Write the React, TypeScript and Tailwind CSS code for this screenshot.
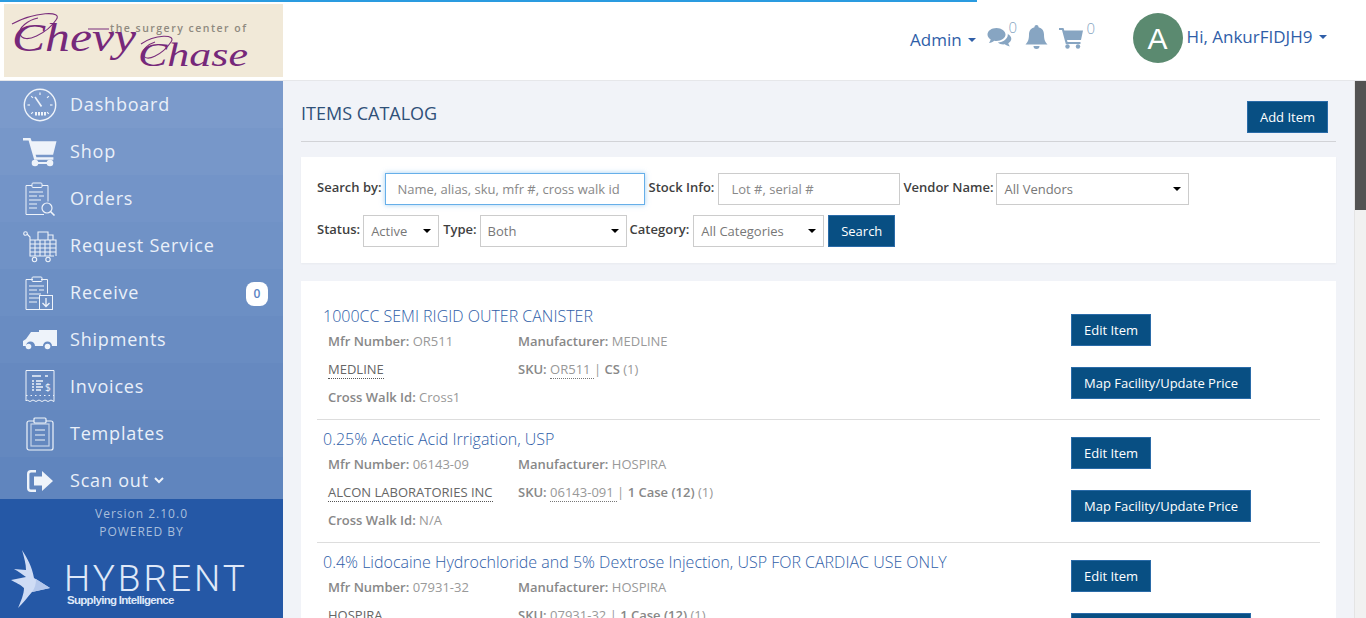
import React from "react";

const W = "#eef3fa";

function Gauge() {
  const ticks = [0, 45, 90, 135, 225, 270, 315];
  return (
    <svg width="34" height="34" viewBox="0 0 34 34" fill="none" stroke={W}>
      <circle cx="17" cy="17" r="15.7" strokeWidth="1.4" />
      {ticks.map((a) => (
        <line key={a} x1="17" y1="4.5" x2="17" y2="7" strokeWidth="1.2" transform={`rotate(${a} 17 17)`} />
      ))}
      <line x1="12" y1="9" x2="18.5" y2="18.5" strokeWidth="1.6" />
      <rect x="12" y="24" width="2" height="3.5" fill={W} stroke="none" />
      <rect x="15" y="24" width="2" height="3.5" fill={W} stroke="none" />
      <rect x="18" y="24" width="2" height="3.5" fill={W} stroke="none" />
      <rect x="21" y="24" width="2" height="3.5" fill={W} stroke="none" />
    </svg>
  );
}
function Cart() {
  return (
    <svg width="34" height="30" viewBox="0 0 34 30" fill={W}>
      <path d="M0 1h7.500l1.200 3.200H33.500l-3.400 13.600H12.600l.8 2.400h17v2.600H11.200L5.600 3.600H0z" />
      <circle cx="12" cy="26" r="3.300" />
      <circle cx="27" cy="26" r="3.300" />
      <rect x="12" y="25" width="15" height="2" />
    </svg>
  );
}
function ClipSearch() {
  return (
    <svg width="34" height="34" viewBox="0 0 34 34" fill="none" stroke={W} strokeWidth="1">
      <path d="M9 3.500H3v29h18" />
      <path d="M19 3.500h6v16" />
      <rect x="9" y="1" width="10" height="4.500" rx="1" />
      <path d="M6 10h14M6 14h8M16 14h5M6 18h12M6 22h8M6 26h8" strokeWidth="1.200" />
      <circle cx="24" cy="26" r="5" strokeWidth="1.200" />
      <path d="M27.500 29.500l4 4" strokeWidth="1.600" />
    </svg>
  );
}
function ServiceCart() {
  return (
    <svg width="34" height="34" viewBox="0 0 34 34" fill="none" stroke={W} strokeWidth="1.100">
      <circle cx="2.500" cy="4.500" r="1.800" />
      <path d="M4 5l3 3v19h24" />
      <path d="M7 11h26v16M7 15h26M7 19h26M7 23h26M12 11v16M17 11v16M22 11v16M27 11v16" />
      <path d="M15 11V3h10v8M25 6h5v5" />
      <circle cx="11.500" cy="30.500" r="2.200" />
      <circle cx="25" cy="30.500" r="2.200" />
    </svg>
  );
}
function ClipDown() {
  return (
    <svg width="34" height="34" viewBox="0 0 34 34" fill="none" stroke={W} strokeWidth="1">
      <path d="M10 3.500H3v30h18" />
      <path d="M18 3.500h6.500v14" />
      <rect x="9" y="1" width="10" height="4.500" rx="1" />
      <path d="M6 10h15M6 14h8M16 14h5M6 18h12M6 22h10M6 26h8" strokeWidth="1.200" />
      <rect x="16.500" y="19.500" width="13" height="14" />
      <path d="M23 22v8M19.500 27l3.500 3.500 3.500-3.500" strokeWidth="1.300" />
    </svg>
  );
}
function Truck() {
  return (
    <svg width="34" height="20" viewBox="0 0 34 20" fill={W}>
      <path d="M16 0h18v16h-5a4.500 4.500 0 0 0-9 0h-8a4.500 4.500 0 0 0-9 0H0v-5l3-2 5-7h8z" />
      <circle cx="5.500" cy="16.500" r="2.800" />
      <circle cx="24.500" cy="16.500" r="2.800" />
    </svg>
  );
}
function Receipt() {
  return (
    <svg width="30" height="34" viewBox="0 0 30 34" fill="none" stroke={W} strokeWidth="1">
      <path d="M1 .5h28v31l-3-1.500-3 1.500-3-1.500-3 1.500-3-1.500-3 1.500-3-1.500-3 1.500-3-1.500-1 1z" />
      <path d="M7 6h9M20 6h3M7 11h2M11 11h7M7 14h2M11 14h5M7 17h2M11 17h7M7 20h2M11 20h5" strokeWidth="1.300" />
      <path d="M1 25.500h28" strokeDasharray="1.500 3" />
      <text x="20" y="21" fill={W} stroke="none" fontSize="10" fontFamily="Open Sans, sans-serif">$</text>
    </svg>
  );
}
function Template() {
  return (
    <svg width="28" height="34" viewBox="0 0 28 34" fill="none" stroke={W} strokeWidth="1.200">
      <rect x="1" y="4" width="26" height="29" rx="2" />
      <rect x="5" y="7" width="18" height="22" opacity=".7" />
      <rect x="8" y="1" width="12" height="5" rx="1" fill="#6d90c4" />
      <path d="M9 13h10M9 18h10M9 23h10" />
    </svg>
  );
}
function ScanOut() {
  return (
    <svg width="28" height="24" viewBox="0 0 28 24" fill={W}>
      <path d="M10 1H5a4 4 0 0 0-4 4v14a4 4 0 0 0 4 4h5v-2.400H5A1.600 1.600 0 0 1 3.400 19V5A1.600 1.600 0 0 1 5 3.400h5z" />
      <path d="M8 7.500h8V2l11 10-11 10v-5.500H8z" />
    </svg>
  );
}

const menu: { label: React.ReactNode; icon: React.ReactNode; bg: string; badge?: boolean }[] = [
  { label: "Dashboard", icon: <Gauge />, bg: "bg-[#7b9acb]" },
  { label: "Shop", icon: <Cart />, bg: "bg-[#7797c9]" },
  { label: "Orders", icon: <ClipSearch />, bg: "bg-[#7394c8]" },
  { label: "Request Service", icon: <ServiceCart />, bg: "bg-[#7092c6]" },
  { label: "Receive", icon: <ClipDown />, bg: "bg-[#6c8fc4]", badge: true },
  { label: "Shipments", icon: <Truck />, bg: "bg-[#698cc2]" },
  { label: "Invoices", icon: <Receipt />, bg: "bg-[#6689c0]" },
  { label: "Templates", icon: <Template />, bg: "bg-[#6488bf]" },
  {
    label: (
      <span className="flex items-center gap-[5px]">
        Scan out
        <svg width="10" height="7" viewBox="0 0 10 7" fill="none" stroke={W} strokeWidth="2"><path d="M1 1l4 4 4-4" /></svg>
      </span>
    ),
    icon: <ScanOut />,
    bg: "bg-[#6085be]",
  },
];

function Caret() {
  return <span className="inline-block w-0 h-0 border-x-[4px] border-x-transparent border-t-[4px] border-t-[#2f5ea8]" />;
}

function Btn({ children, className = "" }: { children: React.ReactNode; className?: string }) {
  return (
    <button className={`h-8 pt-[1px] bg-[#084f83] border border-[#2a6ba8] text-white text-[13px] font-normal flex items-center justify-center ${className}`}>
      {children}
    </button>
  );
}

function Label({ children }: { children: React.ReactNode }) {
  return <span className="text-[13px] font-semibold text-[#3f3f3f] leading-[28px] self-start whitespace-nowrap">{children}</span>;
}

function Sel({ children, className = "" }: { children: string; className?: string }) {
  return (
    <span className={`relative block h-8 ${className}`}>
      <select className="block w-full h-8 appearance-none rounded-none bg-white border border-[#cccccc] text-[13px] text-[#777] pl-[7px] pt-[2px]">
        <option>{children}</option>
      </select>
      <span className="absolute right-[8px] top-[14px] w-0 h-0 border-x-[4px] border-x-transparent border-t-[4px] border-t-black" />
    </span>
  );
}

const items = [
  { t: "1000CC SEMI RIGID OUTER CANISTER", m: "OR511", f: "MEDLINE", v: "MEDLINE", s: "OR511", p: "CS", c: "Cross1" },
  { t: "0.25% Acetic Acid Irrigation, USP", m: "06143-09", f: "HOSPIRA", v: "ALCON LABORATORIES INC", s: "06143-091", p: "1 Case (12)", c: "N/A" },
  { t: "0.4% Lidocaine Hydrochloride and 5% Dextrose Injection, USP FOR CARDIAC USE ONLY", m: "07931-32", f: "HOSPIRA", v: "HOSPIRA", s: "07931-32", p: "1 Case (12)", c: "N/A" },
];

function Logo() {
  return (
    <svg width="279" height="73" viewBox="0 0 279 73" className="block">
      <rect width="279" height="73" fill="#f1e9d8" />
      <path d="M8 20C30 8 60 6 52 16 44 28 20 42 16 30 14 24 24 16 34 14M84 25h21" fill="none" stroke="#7a2e7c" strokeWidth="1.100" />
      <path d="M137 40c14-10 36-10 30-2-8 12-26 22-28 12-1-5 6-10 12-12" fill="none" stroke="#7a2e7c" strokeWidth="1.100" />
      <text x="8" y="47" fontFamily="Liberation Serif, serif" fontStyle="italic" fontSize="40" fill="#76287a" textLength="124" lengthAdjust="spacingAndGlyphs">Chevy</text>
      <text x="134" y="62" fontFamily="Liberation Serif, serif" fontStyle="italic" fontSize="34" fill="#76287a" textLength="110" lengthAdjust="spacingAndGlyphs">Chase</text>
      <text x="106" y="28" fontFamily="Open Sans, sans-serif" fontWeight="600" fontSize="10.500" fill="#8f8a80" textLength="136">the surgery center of</text>
    </svg>
  );
}

function Wing() {
  return (
    <svg width="40" height="58" viewBox="0 0 40 58" className="shrink-0">
      <path d="M11 0c5 8 10 16 12 28l16 10-18 4c-5 6-9 11-14 16 3-7 6-14 6-20C9 34 5 33 0 30l15-3C11 24 8 22 3 19l12 1C15 14 13 7 11 0z" fill="#cfdcf5" />
      <path d="M21 42l18-4-14-9c0 5-1 9-4 13z" fill="#b5c8ec" />
    </svg>
  );
}

export default function App() {
  return (
    <div className="relative h-[618px] w-[1366px] overflow-hidden flex flex-col bg-[#f1f3f8] font-['Open_Sans',sans-serif]">
      <div className="absolute left-0 top-0 h-[2px] w-[977px] bg-[#2a9be0]" />
      <header className="h-[81px] shrink-0 bg-white border-b border-[#e6e7ea] flex">
        <div className="pl-[4px] pt-[4px] w-[283px] shrink-0"><Logo /></div>
        <div className="flex-1 flex items-start pl-[627px] text-[#2f5ea8] text-[17px]">
          <span className="mt-[29px] leading-[22px] flex items-center gap-[6px]">Admin <Caret /></span>
          <span className="ml-[11px] mt-[27px] flex">
            <svg width="25" height="21" viewBox="0 0 25 21" fill="#87a5c2">
              <path d="M9.500 1C4.500 1 .5 3.900.5 7.500c0 2 1.300 3.800 3.200 5C3.400 13.700 2.700 15 2 16c2-.3 4-1.200 5.300-2.300.7.100 1.400.2 2.200.2 5 0 9-2.900 9-6.400S14.500 1 9.500 1z" />
              <path d="M20.500 6.500c.2.400.3.800.3 1.200 0 4-4.300 7.400-10 7.800 1.400 1.200 3.300 1.900 5.500 1.900.5 0 1 0 1.500-.1 1.300 1 3 1.800 5 2.200-.7-1-1.300-2.200-1.500-3.200 1.800-1.100 3-2.700 3-4.500 0-2-1.500-3.700-3.800-4.700z" />
            </svg>
          </span>
          <span className="mt-[18px] -ml-[3px] text-[15px] font-light leading-[18px] text-[#87a5c2] w-[16px]">0</span>
          <span className="mt-[25px]">
            <svg width="23" height="25" viewBox="0 0 23 25" fill="#87a5c2">
              <path d="M11.500 0a2 2 0 0 1 2 2.200c3.600.8 5.500 3.600 5.500 7.300 0 5 1 7.500 3.500 10H.5C3 17 4 14.500 4 9.500c0-3.700 1.900-6.500 5.500-7.300A2 2 0 0 1 11.500 0z" />
              <path d="M8.500 21h6a3 3 0 0 1-6 0z" />
            </svg>
          </span>
          <span className="ml-[11px] mt-[27px]">
            <svg width="24" height="22" viewBox="0 0 24 22" fill="#87a5c2">
              <path d="M0 1h4.500l.8 2.500H24l-2 9.500H8l.5 2h13v2H6.800L3 3H0z" />
              <circle cx="8.500" cy="19.500" r="2.200" />
              <circle cx="19" cy="19.500" r="2.200" />
            </svg>
          </span>
          <span className="mt-[19px] ml-[4px] text-[15px] font-light leading-[18px] text-[#87a5c2] w-[10px]">0</span>
          <span className="ml-[36px] mt-[13px] w-[50px] h-[50px] rounded-full bg-[#5b8a70] text-white text-[30px] font-['Liberation_Sans',sans-serif] flex items-center justify-center">A</span>
          <span className="ml-[4px] mt-[25px] leading-[24px] flex items-center gap-[7px] whitespace-nowrap">Hi, AnkurFIDJH9 <Caret /></span>
        </div>
      </header>

      <div className="flex-1 flex min-h-0">
        <aside className="w-[283px] shrink-0 flex flex-col">
          <nav className="h-[418px] shrink-0 overflow-hidden">
            {menu.map((m, i) => (
              <div key={i} className={`h-[47px] flex items-center pr-[15px] ${m.bg}`}>
                <span className="w-[34px] ml-[23px] mr-[13px] flex justify-center">{m.icon}</span>
                <span className="flex-1 text-[18px] tracking-[0.8px] text-[#eaf0f9]">{m.label}</span>
                {m.badge && (
                  <span className="w-[22px] h-[24px] rounded-[8px] bg-white text-[#5b84c4] text-[12px] font-semibold flex items-center justify-center mt-[2px]">0</span>
                )}
              </div>
            ))}
          </nav>
          <div className="flex-1 bg-[#2558a6] flex flex-col items-center">
            <div className="mt-[6px] text-[12px] leading-[18px] tracking-[1px] text-[#a9bfdc]">Version 2.10.0</div>
            <div className="text-[12px] leading-[18px] tracking-[1px] text-[#a9bfdc]">POWERED BY</div>
            <div className="self-start flex pl-[11px] mt-[9px]">
              <Wing />
              <div className="ml-[13px] mt-[14px]">
                <div className="font-['Roboto',sans-serif] font-light text-[37px] leading-[30px] tracking-[3px] text-[#dfe8f8]">HYBRENT</div>
                <div className="font-['Liberation_Sans',sans-serif] font-bold text-[11.5px] leading-[12px] -tracking-[0.7px] text-[#dfe8f8] ml-[3px]">Supplying Intelligence</div>
              </div>
            </div>
          </div>
        </aside>

        <main className="flex-1 min-w-0 overflow-hidden px-[18px]">
          <div className="h-[61px] border-b border-[#d2d3d7] flex justify-between items-start">
            <h1 className="mt-[20px] text-[18px] leading-[24px] text-[#2f5078]">ITEMS CATALOG</h1>
            <Btn className="mt-[20px] mr-[8px] w-[81px]">Add Item</Btn>
          </div>

          <section className="mt-[15px] h-[106px] bg-white px-[16px] pt-[16px] shadow-[0_1px_2px_rgba(0,0,0,0.04)]">
            <div className="flex items-start">
              <Label>Search by:</Label>
              <input
                placeholder="Name, alias, sku, mfr #, cross walk id"
                className="ml-[3px] w-[260px] h-8 border border-[#66afe9] shadow-[0_0_5px_rgba(102,175,233,0.6)] px-3 text-[13px] outline-none placeholder:text-[#888]"
              />
              <span className="w-[4px]" />
              <Label>Stock Info:</Label>
              <input
                placeholder="Lot #, serial #"
                className="ml-[4px] w-[182px] h-8 border border-[#cccccc] px-3 text-[13px] outline-none placeholder:text-[#888]"
              />
              <span className="w-[3px]" />
              <Label>Vendor Name:</Label>
              <Sel className="ml-[3px] w-[193px]">All Vendors</Sel>
            </div>
            <div className="flex items-start mt-[10px]">
              <Label>Status:</Label>
              <Sel className="ml-[3px] w-[76px]">Active</Sel>
              <span className="w-[4px]" />
              <Label>Type:</Label>
              <Sel className="ml-[3px] w-[147px]">Both</Sel>
              <span className="w-[3px]" />
              <Label>Category:</Label>
              <Sel className="ml-[4px] w-[131px]">All Categories</Sel>
              <Btn className="ml-[4px] w-[67px]">Search</Btn>
            </div>
          </section>

          <section className="mt-[18px] bg-white px-[16px] pt-[16px]">
            {items.map((it) => (
              <div key={it.m} className="h-[123px] shrink-0 border-b border-[#dddddd] flex text-[13px] text-[#999]">
                <div className="w-[754px]">
                  <div className="pt-[8px] pl-[6px] text-[16px] font-light leading-[22px] text-[#2f5ea8] whitespace-nowrap">{it.t}</div>
                  <div className="pl-[11px] pt-[1px]">
                    <div className="h-[28px] flex items-center">
                      <span className="w-[190px]"><b className="font-semibold text-[#888]">Mfr Number:</b> {it.m}</span>
                      <span><b className="font-semibold text-[#888]">Manufacturer:</b> {it.f}</span>
                    </div>
                    <div className="h-[28px] flex items-center">
                      <span className="w-[190px]"><span className="text-[#666] border-b border-dotted border-[#555]">{it.v}</span></span>
                      <span>
                        <b className="font-semibold text-[#888]">SKU:</b>{" "}
                        <span className="border-b border-dotted border-[#777]">{it.s} </span> | <b className="font-semibold text-[#888]">{it.p}</b> (1)
                      </span>
                    </div>
                    <div className="h-[28px] flex items-center">
                      <span><b className="font-semibold text-[#888]">Cross Walk Id:</b> {it.c}</span>
                    </div>
                  </div>
                </div>
                <div className="pt-[17px] flex flex-col items-start gap-[21px]">
                  <Btn className="w-[80px]">Edit Item</Btn>
                  <Btn className="w-[180px]">Map Facility/Update Price</Btn>
                </div>
              </div>
            ))}
          </section>
        </main>

        <div className="w-[12px] shrink-0 bg-[#f1f1f1] border-l border-[#e4e4e4]">
          <div className="h-[129px] bg-[#535353]" />
        </div>
      </div>
    </div>
  );
}
